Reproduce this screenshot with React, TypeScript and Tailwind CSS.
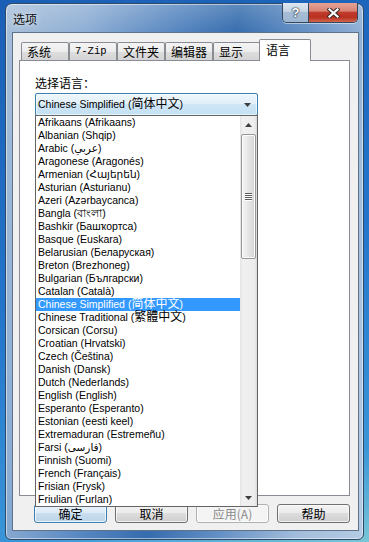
const LANGS: [string, string][] = [
  ["Afrikaans", "Afrikaans"],
  ["Albanian", "Shqip"],
  ["Arabic", "عربي"],
  ["Aragonese", "Aragonés"],
  ["Armenian", "Հայերեն"],
  ["Asturian", "Asturianu"],
  ["Azeri", "Azərbaycanca"],
  ["Bangla", "বাংলা"],
  ["Bashkir", "Башҡортса"],
  ["Basque", "Euskara"],
  ["Belarusian", "Беларуская"],
  ["Breton", "Brezhoneg"],
  ["Bulgarian", "Български"],
  ["Catalan", "Català"],
  ["Chinese Simplified", "简体中文"],
  ["Chinese Traditional", "繁體中文"],
  ["Corsican", "Corsu"],
  ["Croatian", "Hrvatski"],
  ["Czech", "Čeština"],
  ["Danish", "Dansk"],
  ["Dutch", "Nederlands"],
  ["English", "English"],
  ["Esperanto", "Esperanto"],
  ["Estonian", "eesti keel"],
  ["Extremaduran", "Estremeñu"],
  ["Farsi", "فارسی"],
  ["Finnish", "Suomi"],
  ["French", "Français"],
  ["Frisian", "Frysk"],
  ["Friulian", "Furlan"],
];

const SELECTED = 14;

const TABS = ["系统", "7-Zip", "文件夹", "编辑器", "显示"];

// CJK names are drawn a bit larger, like the system fallback font does
function Native({ text }: { text: string }) {
  return /[\u4e00-\u9fff]/.test(text) ? <span className="text-[12px]">{text}</span> : <>{text}</>;
}

function Arrow({ up }: { up?: boolean }) {
  return (
    <svg width="7" height="4" viewBox="0 0 7 4" className={up ? "" : "rotate-180"}>
      <path d="M3.5 0 L7 4 L0 4 Z" fill="#3f3f3f" />
    </svg>
  );
}

function ScrollBar() {
  return (
    <div className="flex w-[17px] flex-col bg-[linear-gradient(to_right,#e3e3e3,#f0f0f0_15%,#ededed_85%,#dadada)]">
      <div className="flex h-[17px] items-center justify-center">
        <Arrow up />
      </div>
      {/* thumb */}
      <div className="mx-[1px] mt-[1px] flex h-[125px] items-center justify-center rounded-[2px] border border-[#979797] bg-[linear-gradient(to_right,#f5f5f5,#e7e7e7_45%,#d4d4d4)] shadow-[inset_0_0_0_1px_#fbfbfb]">
        <div className="flex flex-col gap-[1px]">
          <div className="h-px w-[7px] bg-[#5c5c5c] shadow-[0_1px_0_#ffffff]" />
          <div className="h-px w-[7px] bg-[#5c5c5c] shadow-[0_1px_0_#ffffff]" />
          <div className="h-px w-[7px] bg-[#5c5c5c] shadow-[0_1px_0_#ffffff]" />
          <div className="h-px w-[7px] bg-[#5c5c5c] shadow-[0_1px_0_#ffffff]" />
        </div>
      </div>
      <div className="flex-1" />
      <div className="flex h-[17px] items-center justify-center">
        <Arrow />
      </div>
    </div>
  );
}

function LanguageCombo() {
  return (
    <div className="relative mt-[3px] w-[223px]">
      <div className="flex h-[23px] items-center rounded-[2px] border border-[#3c7fb1] bg-[linear-gradient(#edf6fc,#e1eff9_50%,#cfe6f6_50%,#c3e0f4)] pl-[2px] pr-[6px] shadow-[inset_0_0_0_1px_rgba(255,255,255,0.6)]">
        <span className="flex-1 whitespace-nowrap text-[10.5px] leading-[13px] text-black">
          Chinese Simplified (<Native text="简体中文" />)
        </span>
        <Arrow />
      </div>

      {/* dropped-down list, lies over the dialog */}
      <div className="absolute left-0 top-[22px] z-20 flex h-[392px] w-[223px] border border-[#646464] bg-white">
        <ul className="flex-1">
          {LANGS.map(([name, native], i) => (
            <li
              key={name}
              className={
                i === SELECTED
                  ? "h-[13px] whitespace-nowrap bg-[#3399ff] pl-[2px] text-[10.5px] leading-[13px] text-white"
                  : "h-[13px] whitespace-nowrap pl-[2px] text-[10.5px] leading-[13px] text-black"
              }
            >
              {name} (<Native text={native} />)
            </li>
          ))}
        </ul>
        <ScrollBar />
      </div>
    </div>
  );
}

function DlgButton({ label, kind }: { label: string; kind?: "default" | "disabled" }) {
  const cls =
    kind === "default"
      ? "border-[#3c7fb1] bg-[linear-gradient(#e9f3fb,#dbeaf6_50%,#c9deef_50%,#bcd5ea)] text-black"
      : kind === "disabled"
        ? "border-[#adb2b5] bg-[#f4f4f4] text-[#8a8a8a]"
        : "border-[#707070] bg-[linear-gradient(#f2f2f2,#ebebeb_50%,#dddddd_50%,#cfcfcf)] text-black";
  return (
    <div
      className={`flex h-[19px] w-[73px] items-center justify-center rounded-[3px] border text-[12px] leading-none shadow-[inset_0_0_0_1px_rgba(255,255,255,0.7)] ${cls}`}
    >
      {label}
    </div>
  );
}

export default function App() {
  return (
    <div className="h-[542px] w-[369px] overflow-hidden bg-[linear-gradient(165deg,#1a5fb5_0%,#2376cc_50%,#3a95d8_85%,#78c6d6_100%)] pl-[5px] pt-[3px] font-['Liberation_Sans','DejaVu_Sans','Noto_Sans_CJK_SC',sans-serif]">
      <div className="flex h-[537px] w-[359px] flex-col rounded-b-[6px] rounded-t-[7px] border border-[#2d4a69] bg-[linear-gradient(rgba(255,255,255,0.2),rgba(255,255,255,0)_30px),linear-gradient(100deg,#a7bfd9_0%,#8eaed4_18%,#5686c0_38%,#356cad_52%,#6590c5_68%,#a2bddb_85%,#b4cbe3_100%)] shadow-[inset_0_0_0_1px_rgba(255,255,255,0.5)]">
        {/* title bar */}
        <div className="flex h-[28px] items-start">
          <span className="pl-[7px] pt-[8px] font-['Noto_Sans_CJK_SC',sans-serif] text-[12px] leading-[14px] text-[#101010] [text-shadow:0_0_6px_rgba(255,255,255,0.9)]">
            选项
          </span>
          <div className="ml-auto mr-[5px] mt-[-1px] flex h-[20px] overflow-hidden rounded-b-[5px] border border-t-0 border-[#33485f] shadow-[0_1px_0_rgba(255,255,255,0.5)]">
            <div className="flex w-[26px] items-center justify-center border-r border-[#33485f] bg-[linear-gradient(#dfe7f0,#c4d3e3_45%,#a6bcd4_50%,#9fb7d3)] text-[13px] font-bold leading-none text-white [text-shadow:0_0_1px_#26384d,0_0_1px_#26384d,0_0_2px_#26384d]">
              ?
            </div>
            <div className="flex w-[48px] items-center justify-center bg-[linear-gradient(#e6a496,#d98474_42%,#c23a2b_50%,#b8301f_75%,#d4664f)]">
              <svg width="13" height="10" viewBox="0 0 13 10">
                <path d="M2.5 1.5 L10.5 8.5 M10.5 1.5 L2.5 8.5" stroke="#3a2a2a" strokeWidth="4.2" strokeLinecap="square" />
                <path d="M2.5 1.5 L10.5 8.5 M10.5 1.5 L2.5 8.5" stroke="#ffffff" strokeWidth="2.2" strokeLinecap="square" />
              </svg>
            </div>
          </div>
        </div>

        {/* client area */}
        <div className="mb-[8px] ml-[6px] mr-[4px] flex-1 border border-[#5e7289] bg-[#f0f0f0] pl-[6px] pr-[8px] pt-[6px] font-['Noto_Sans_CJK_SC',sans-serif]">
          <div className="relative z-10 flex h-[21px] items-end pl-[2px]">
            {TABS.map((t) => (
              <div
                key={t}
                className="flex h-[18px] w-[48px] items-center rounded-t-[2px] border border-b-0 border-[#898c95] bg-[linear-gradient(#f4f4f4,#ececec_50%,#dedede_50%,#d4d4d4)] pl-[5px] text-[12px] leading-none text-black"
              >
                {t === "7-Zip" ? (
                  <span className="font-['Liberation_Mono',monospace] text-[10.5px]">{t}</span>
                ) : (
                  t
                )}
              </div>
            ))}
            <div className="mb-[-1px] ml-[-2px] flex h-[22px] w-[52px] items-center rounded-t-[2px] border border-b-0 border-[#898c95] bg-white pb-[2px] pl-[6px] text-[12px] leading-none text-black">
              语言
            </div>
          </div>

          <div className="h-[436px] border border-[#898c95] bg-white pl-[15px] pt-[15px]">
            <div className="text-[12px] leading-[14px] text-black">选择语言：</div>
            <div className="font-['Liberation_Sans','DejaVu_Sans','Noto_Sans_CJK_SC',sans-serif]">
              <LanguageCombo />
            </div>
          </div>

          <div className="mt-[8px] flex justify-end gap-[8px]">
            <DlgButton label="确定" kind="default" />
            <DlgButton label="取消" />
            <DlgButton label="应用(A)" kind="disabled" />
            <DlgButton label="帮助" />
          </div>
        </div>
      </div>
    </div>
  );
}
